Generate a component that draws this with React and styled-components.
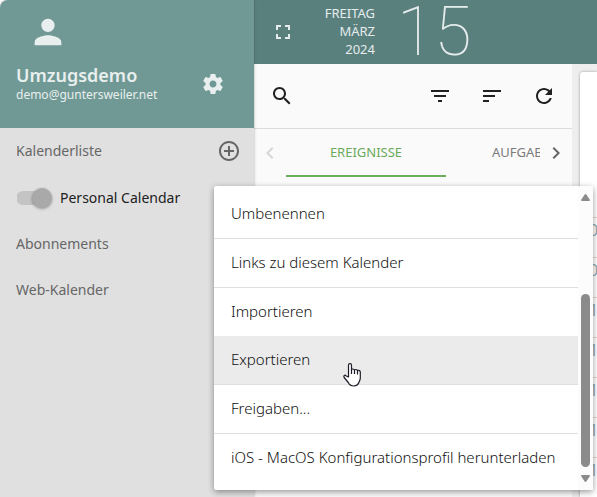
import React from "react";
import styled, { createGlobalStyle } from "styled-components";

const Global = createGlobalStyle`
  *, *::before, *::after { box-sizing: border-box; }
  body {
    margin: 0;
    font-family: "Noto Sans", sans-serif;
    font-size: 14px;
    line-height: 18px;
    color: #212121;
    background: #fff;
  }
  button { font: inherit; color: inherit; background: none; border: 0; padding: 0; cursor: pointer; }
  h1, h2, p, ul { margin: 0; padding: 0; }
  ul { list-style: none; }
`;

const Page = styled.div`
  position: relative;
  display: flex;
  height: 100vh;
  overflow: hidden;
`;

const Sidebar = styled.aside`
  position: relative;
  flex: 0 0 254px;
  display: flex;
  flex-direction: column;
  background: #e0e0e0;
  box-shadow: 0 0 3px rgba(0, 0, 0, 0.3);
  border-top-left-radius: 8px;
  z-index: 1;
`;

const Profile = styled.header`
  display: flex;
  flex-direction: column;
  justify-content: space-between;
  height: 128px;
  padding: 12px 29px 24px 16px;
  background: #709995;
  color: #e8efee;
  border-top-left-radius: 8px;
`;

const Avatar = styled.div`
  padding-left: 12px;
  height: 40px;
`;

const Account = styled.div`
  display: flex;
  align-items: center;
  justify-content: space-between;
`;

const UserName = styled.h1`
  font-size: 18px;
  font-weight: 600;
  line-height: 22px;
`;

const Email = styled.p`
  font-size: 12px;
  line-height: 18px;
`;

const IconButton = styled.button`
  display: flex;
  align-items: center;
  justify-content: center;
  flex: none;
  width: 24px;
  height: 24px;
  color: ${(p) => p.$color || "inherit"};
`;

const SectionRow = styled.div`
  display: flex;
  align-items: center;
  justify-content: space-between;
  height: 46px;
  padding: 0 13px 0 16px;
`;

const SectionTitle = styled.h2`
  font-size: 14px;
  font-weight: 400;
  color: #666;
`;

const CalendarRow = styled.label`
  display: flex;
  align-items: center;
  gap: 8px;
  height: 47px;
  padding: 0 16px;
`;

const Toggle = styled.input`
  appearance: none;
  display: flex;
  align-items: center;
  width: 36px;
  height: 14px;
  margin: 0;
  background: linear-gradient(#c4c4c4, #c4c4c4) 1px 0 / 34px 14px no-repeat;
  border-radius: 7px;

  &::before {
    content: "";
    width: 20px;
    height: 20px;
    margin-left: ${(p) => (p.defaultChecked ? "16px" : "0")};
    flex: none;
    border-radius: 50%;
    background: #a9a9a9;
    box-shadow: 0 1px 3px rgba(0, 0, 0, 0.35);
  }
`;

const Main = styled.main`
  flex: 1;
  min-width: 0;
  display: flex;
  flex-direction: column;
`;

const DateBar = styled.header`
  display: flex;
  align-items: center;
  flex: 0 0 64px;
  padding-left: 17px;
  background: #5a807e;
  color: #e6ecec;
`;

const DateText = styled.p`
  width: 80px;
  padding-bottom: 2px;
  text-align: right;
  text-transform: uppercase;
  font-size: 13px;
  line-height: 18px;
`;

const DayNumber = styled.p`
  margin-left: 22px;
  font-family: Roboto, sans-serif;
  font-weight: 100;
  font-size: 68px;
  line-height: 64px;
`;

const Body = styled.div`
  flex: 1;
  display: flex;
  min-height: 0;
`;

const ListPane = styled.section`
  flex: 0 0 318px;
  min-width: 0;
  background: #fafafa;
`;

const Toolbar = styled.div`
  display: flex;
  align-items: center;
  gap: 28px;
  height: 65px;
  padding: 0 16px;
  border-bottom: 1px solid #dcdcdc;

  & > :first-child { margin-right: auto; }
`;

const Tabs = styled.div`
  display: flex;
  align-items: center;
  height: 48px;
  padding: 0 4px;
`;

const TabStrip = styled.div`
  flex: 1;
  min-width: 0;
  display: flex;
  height: 48px;
  margin: 0 4px;
  overflow: hidden;
`;

const Tab = styled.button`
  flex: 0 0 160px;
  height: 48px;
  font-size: 13px;
  text-transform: uppercase;
  color: ${(p) => (p.$active ? "#6aaa5c" : "#7b7b7b")};
  border-bottom: 2px solid ${(p) => (p.$active ? "#6aaf5b" : "transparent")};
`;

const DayPane = styled.section`
  flex: 1;
  min-width: 0;
  padding: 8px 0 0 8px;
  background: #eee;
`;

const DayCard = styled.div`
  height: 100%;
  padding-top: 145px;
  overflow: hidden;
  background: #fff;
  border-top-left-radius: 3px;
  box-shadow: 0 0 3px rgba(0, 0, 0, 0.35);
`;

const Hour = styled.div`
  height: 40px;
  padding-left: 9px;
  border-top: 1px solid #e4d5c4;
  color: #8fa9ae;
  font-size: 16px;
  line-height: 24px;
`;

const Menu = styled.div`
  position: absolute;
  left: 214px;
  top: 186px;
  display: flex;
  width: 379px;
  background: #fff;
  border-radius: 2px;
  box-shadow: 0 2px 6px rgba(0, 0, 0, 0.4);
  z-index: 2;
`;

const MenuList = styled.ul`
  flex: 1;
  padding: 4px 0 8px;
`;

const MenuItem = styled.li`
  height: 49px;
  margin-top: ${(p) => (p.$active ? "-1px" : "0")};
  border-bottom: 1px solid #dedede;
  background: ${(p) => (p.$active ? "#ebebeb" : "transparent")};

  &:last-child { height: 48px; border-bottom: 0; }
`;

const MenuButton = styled.button`
  width: 100%;
  height: 48px;
  padding: 0 17px 2px;
  font-size: 15px;
  font-weight: 300;
  color: #111;
  text-align: left;
  white-space: nowrap;
`;

const ScrollTrack = styled.div`
  flex: 0 0 15px;
  display: flex;
  flex-direction: column;
  align-items: center;
  padding: 8px 0;
  background: #fcfcfc;
  color: #8b8b8b;

  svg { display: block; }
`;

const ScrollThumb = styled.div`
  width: 9px;
  height: 173px;
  margin: auto 0 8px;
  border-radius: 5px;
  background: #8b8b8b;
`;

const Pointer = styled.svg`
  position: absolute;
  left: 343px;
  top: 363px;
  z-index: 3;
`;

const Icon = ({ d, size = 24 }) => (
  <svg width={size} height={size} viewBox="0 0 24 24" fill="currentColor" aria-hidden="true">
    <path d={d} />
  </svg>
);

const icons = {
  person: "M12 12c2.210 0 4-1.790 4-4s-1.790-4-4-4-4 1.790-4 4 1.790 4 4 4zm0 2c-2.670 0-8 1.340-8 4v2h16v-2c0-2.660-5.330-4-8-4z",
  gear: "M19.430 12.980c.04-.32.07-.64.07-.98s-.03-.66-.07-.98l2.110-1.650c.19-.15.24-.42.12-.64l-2-3.460c-.12-.22-.39-.3-.61-.22l-2.490 1c-.52-.4-1.080-.73-1.690-.98l-.38-2.650C14.460 2.180 14.250 2 14 2h-4c-.25 0-.46.18-.49.42l-.38 2.650c-.61.25-1.170.59-1.690.98l-2.490-1c-.23-.09-.49 0-.61.22l-2 3.460c-.13.22-.07.49.12.64l2.110 1.650c-.04.32-.07.65-.07.98s.03.66.07.98l-2.110 1.650c-.19.15-.24.42-.12.64l2 3.460c.12.22.39.3.61.22l2.490-1c.52.4 1.080.73 1.690.98l.38 2.650c.03.24.24.42.49.42h4c.25 0 .46-.18.49-.42l.38-2.650c.61-.25 1.170-.59 1.690-.98l2.490 1c.23.09.49 0 .61-.22l2-3.460c.12-.22.07-.49-.12-.64l-2.110-1.650zM12 15.500c-1.930 0-3.500-1.570-3.500-3.500s1.570-3.500 3.500-3.500 3.500 1.570 3.500 3.500-1.570 3.500-3.500 3.500z",
  add: "M13 7h-2v4H7v2h4v4h2v-4h4v-2h-4V7zm-1-5C6.480 2 2 6.480 2 12s4.480 10 10 10 10-4.480 10-10S17.520 2 12 2zm0 18c-4.410 0-8-3.590-8-8s3.590-8 8-8 8 3.590 8 8-3.590 8-8 8z",
  fullscreen: "M7 14H5v5h5v-2H7v-3zm-2-4h2V7h3V5H5v5zm12 7h-3v2h5v-5h-2v3zM14 5v2h3v3h2V5h-5z",
  search: "M15.500 14h-.79l-.28-.27C15.410 12.590 16 11.110 16 9.500 16 5.910 13.090 3 9.500 3S3 5.910 3 9.500 5.910 16 9.500 16c1.610 0 3.090-.59 4.230-1.570l.27.28v.79l5 4.990L20.490 19l-4.990-5zm-6 0C7.010 14 5 11.990 5 9.500S7.010 5 9.500 5 14 7.010 14 9.500 11.990 14 9.500 14z",
  filter: "M10 18h4v-2h-4v2zM3 6v2h18V6H3zm3 7h12v-2H6v2z",
  sort: "M3 18h6v-2H3v2zM3 6v2h18V6H3zm0 7h12v-2H3v2z",
  refresh: "M17.650 6.350C16.200 4.900 14.210 4 12 4c-4.420 0-7.990 3.580-7.990 8s3.570 8 7.990 8c3.730 0 6.840-2.550 7.730-6h-2.080c-.82 2.330-3.040 4-5.650 4-3.310 0-6-2.690-6-6s2.690-6 6-6c1.660 0 3.140.69 4.220 1.780L13 11h7V4l-2.350 2.350z",
  left: "M15.410 7.410L14 6l-6 6 6 6 1.410-1.410L10.830 12z",
  right: "M10 6L8.590 7.410 13.170 12l-4.580 4.590L10 18l6-6z",
};

const menuItems = [
  "Umbenennen",
  "Links zu diesem Kalender",
  "Importieren",
  "Exportieren",
  "Freigaben...",
  "iOS - MacOS Konfigurationsprofil herunterladen",
];

const hours = ["08", "09", "10", "11", "12", "13", "14"];

export default function App() {
  return (
    <>
      <Global />
      <Page>
        <Sidebar>
          <Profile>
            <Avatar><Icon d={icons.person} size={40} /></Avatar>
            <Account>
              <div>
                <UserName>Umzugsdemo</UserName>
                <Email>demo@guntersweiler.net</Email>
              </div>
              <IconButton aria-label="Einstellungen"><Icon d={icons.gear} /></IconButton>
            </Account>
          </Profile>
          <SectionRow>
            <SectionTitle>Kalenderliste</SectionTitle>
            <IconButton aria-label="Kalender hinzufügen" $color="#666"><Icon d={icons.add} /></IconButton>
          </SectionRow>
          <CalendarRow>
            <Toggle type="checkbox" role="switch" defaultChecked />
            Personal Calendar
          </CalendarRow>
          <SectionRow><SectionTitle>Abonnements</SectionTitle></SectionRow>
          <SectionRow><SectionTitle>Web-Kalender</SectionTitle></SectionRow>
        </Sidebar>

        <Main>
          <DateBar>
            <IconButton aria-label="Vollbild"><Icon d={icons.fullscreen} /></IconButton>
            <DateText>Freitag<br />März<br />2024</DateText>
            <DayNumber>15</DayNumber>
          </DateBar>
          <Body>
            <ListPane>
              <Toolbar>
                <IconButton aria-label="Suchen"><Icon d={icons.search} /></IconButton>
                <IconButton aria-label="Filtern"><Icon d={icons.filter} /></IconButton>
                <IconButton aria-label="Sortieren"><Icon d={icons.sort} /></IconButton>
                <IconButton aria-label="Aktualisieren"><Icon d={icons.refresh} /></IconButton>
              </Toolbar>
              <Tabs>
                <IconButton aria-label="Zurück" $color="#d6d6d6"><Icon d={icons.left} /></IconButton>
                <TabStrip role="tablist">
                  <Tab role="tab" aria-selected="true" $active>Ereignisse</Tab>
                  <Tab role="tab" aria-selected="false">Aufgaben</Tab>
                </TabStrip>
                <IconButton aria-label="Weiter" $color="#666"><Icon d={icons.right} /></IconButton>
              </Tabs>
            </ListPane>
            <DayPane>
              <DayCard>
                {hours.map((h) => <Hour key={h}>{h}</Hour>)}
              </DayCard>
            </DayPane>
          </Body>
        </Main>

        <Menu>
          <MenuList>
            {menuItems.map((label) => (
              <MenuItem key={label} $active={label === "Exportieren"}>
                <MenuButton>{label}</MenuButton>
              </MenuItem>
            ))}
          </MenuList>
          <ScrollTrack aria-hidden="true">
            <svg width="9" height="7" viewBox="0 0 9 7"><path d="M4.500 0q.6 0 1 .7L9 6q0 1-1 1H1Q0 7 0 6L3.500.7q.4-.7 1-.7z" fill="currentColor" /></svg>
            <ScrollThumb />
            <svg width="9" height="7" viewBox="0 0 9 7"><path d="M4.500 7q.6 0 1-.7L9 1q0-1-1-1H1Q0 0 0 1l3.500 5.300q.4.700 1 .7z" fill="currentColor" /></svg>
          </ScrollTrack>
        </Menu>

        <Pointer width="18" height="24" viewBox="0 0 18 24" aria-hidden="true">
          <path
            d="M5.500 14V2.200C5.500.2 8.500.2 8.500 2.200V7c0-1.500 3-1.300 3 .5 0-1.500 3-1.300 3 .5 0-1.200 2.800-1 2.800 1v6c0 1.500-.6 2.500-1 3.500-.9 2.800-2.500 4.500-5.500 4.500s-4.400-1.200-5.500-3.500L1.200 14.500C.2 12.500 2 11.500 3.200 13z"
            fill="#fff" stroke="#1c1c28" strokeWidth="1.200" strokeLinejoin="round"
          />
          <path d="M8.500 6.500V11M11.500 7.500V11M14.500 8v3.500" stroke="#1c1c28" strokeWidth="1.200" fill="none" />
        </Pointer>
      </Page>
    </>
  );
}
